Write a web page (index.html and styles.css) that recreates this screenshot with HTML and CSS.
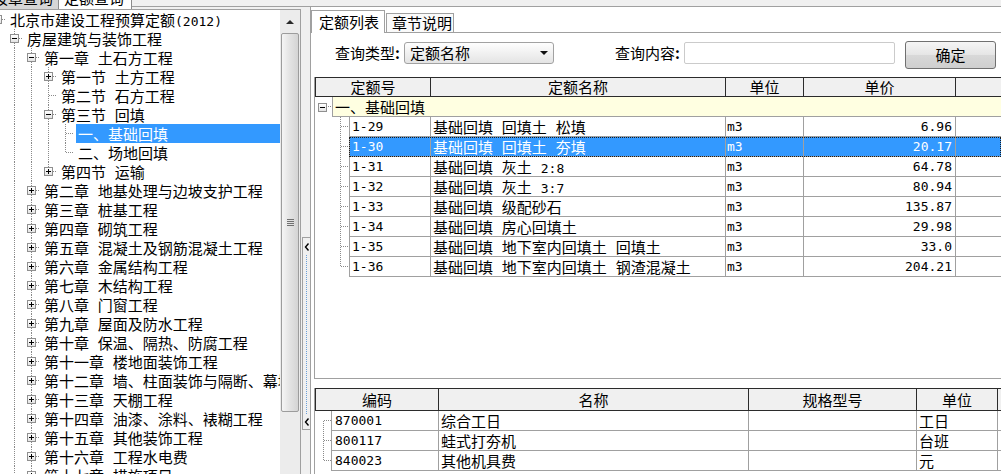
FILE: index.html
```html
<!DOCTYPE html>
<html lang="zh-CN">
<head>
<meta charset="utf-8">
<title>定额查询</title>
<link rel="stylesheet" href="styles.css">
</head>
<body>
<div class="app">
  <div class="topstrip">
    <div class="otab otab-a"><span>按章查询</span></div>
    <div class="otab otab-b"><span>定额查询</span></div>
    <div class="strip-fill"></div>
  </div>
  <div class="main">
    <div class="left">
      <div class="tree">
        <div class="tree-inner">
          <div class="row"><span class="g h"><i class="bx"></i></span><span class="lbl">北京市建设工程预算定额<span class="a">(2012)</span></span></div>
          <div class="row"><span class="g"></span><span class="g v h"><i class="bx"></i></span><span class="lbl">房屋建筑与装饰工程</span></div>
          <div class="row"><span class="g"></span><span class="g v"></span><span class="g v h"><i class="bx"></i></span><span class="lbl">第一章 土石方工程</span></div>
          <div class="row"><span class="g"></span><span class="g v"></span><span class="g v"></span><span class="g v h"><i class="bx plus"></i></span><span class="lbl">第一节 土方工程</span></div>
          <div class="row"><span class="g"></span><span class="g v"></span><span class="g v"></span><span class="g v h"></span><span class="lbl">第二节 石方工程</span></div>
          <div class="row"><span class="g"></span><span class="g v"></span><span class="g v"></span><span class="g v h"><i class="bx"></i></span><span class="lbl">第三节 回填</span></div>
          <div class="row sel"><span class="g"></span><span class="g v"></span><span class="g v"></span><span class="g v"></span><span class="g v h"></span><span class="lbl">一、基础回填</span></div>
          <div class="row"><span class="g"></span><span class="g v"></span><span class="g v"></span><span class="g v"></span><span class="g up h"></span><span class="lbl">二、场地回填</span></div>
          <div class="row"><span class="g"></span><span class="g v"></span><span class="g v"></span><span class="g up h"><i class="bx plus"></i></span><span class="lbl">第四节 运输</span></div>
          <div class="row"><span class="g"></span><span class="g v"></span><span class="g v h"><i class="bx plus"></i></span><span class="lbl">第二章 地基处理与边坡支护工程</span></div>
          <div class="row"><span class="g"></span><span class="g v"></span><span class="g v h"><i class="bx plus"></i></span><span class="lbl">第三章 桩基工程</span></div>
          <div class="row"><span class="g"></span><span class="g v"></span><span class="g v h"><i class="bx plus"></i></span><span class="lbl">第四章 砌筑工程</span></div>
          <div class="row"><span class="g"></span><span class="g v"></span><span class="g v h"><i class="bx plus"></i></span><span class="lbl">第五章 混凝土及钢筋混凝土工程</span></div>
          <div class="row"><span class="g"></span><span class="g v"></span><span class="g v h"><i class="bx plus"></i></span><span class="lbl">第六章 金属结构工程</span></div>
          <div class="row"><span class="g"></span><span class="g v"></span><span class="g v h"><i class="bx plus"></i></span><span class="lbl">第七章 木结构工程</span></div>
          <div class="row"><span class="g"></span><span class="g v"></span><span class="g v h"><i class="bx plus"></i></span><span class="lbl">第八章 门窗工程</span></div>
          <div class="row"><span class="g"></span><span class="g v"></span><span class="g v h"><i class="bx plus"></i></span><span class="lbl">第九章 屋面及防水工程</span></div>
          <div class="row"><span class="g"></span><span class="g v"></span><span class="g v h"><i class="bx plus"></i></span><span class="lbl">第十章 保温、隔热、防腐工程</span></div>
          <div class="row"><span class="g"></span><span class="g v"></span><span class="g v h"><i class="bx plus"></i></span><span class="lbl">第十一章 楼地面装饰工程</span></div>
          <div class="row"><span class="g"></span><span class="g v"></span><span class="g v h"><i class="bx plus"></i></span><span class="lbl">第十二章 墙、柱面装饰与隔断、幕墙工程</span></div>
          <div class="row"><span class="g"></span><span class="g v"></span><span class="g v h"><i class="bx plus"></i></span><span class="lbl">第十三章 天棚工程</span></div>
          <div class="row"><span class="g"></span><span class="g v"></span><span class="g v h"><i class="bx plus"></i></span><span class="lbl">第十四章 油漆、涂料、裱糊工程</span></div>
          <div class="row"><span class="g"></span><span class="g v"></span><span class="g v h"><i class="bx plus"></i></span><span class="lbl">第十五章 其他装饰工程</span></div>
          <div class="row"><span class="g"></span><span class="g v"></span><span class="g v h"><i class="bx plus"></i></span><span class="lbl">第十六章 工程水电费</span></div>
          <div class="row"><span class="g"></span><span class="g v"></span><span class="g v h"><i class="bx plus"></i></span><span class="lbl">第十七章 措施项目</span></div>
        </div>
      </div>
      <div class="vscroll">
        <div class="sb-up"><i class="tri-up"></i></div>
        <div class="sb-thumb"><i class="grip"></i></div>
      </div>
    </div>
    <div class="split">
      <div class="handle">
        <svg class="chev" width="6" height="8" viewBox="0 0 6 8"><path d="M4.5 0.5 L1.5 4 L4.5 7.5" fill="none" stroke="#000" stroke-width="1.4"/></svg>
        <i class="dots"></i>
        <svg class="chev" width="6" height="8" viewBox="0 0 6 8"><path d="M4.5 0.5 L1.5 4 L4.5 7.5" fill="none" stroke="#000" stroke-width="1.4"/></svg>
      </div>
    </div>
    <div class="right">
      <div class="tabs">
        <div class="tab tab-on">定额列表</div>
        <div class="tab tab-off">章节说明</div>
      </div>
      <div class="panel">
        <div class="query">
          <span class="qlabel">查询类型<span class="colon">:</span></span>
          <div class="select"><span>定额名称</span><i class="tri-down"></i></div>
          <span class="qlabel qlabel2">查询内容<span class="colon">:</span></span>
          <div class="input"></div>
          <div class="btn">确定</div>
        </div>

        <div class="grid grid-top">
          <div class="thead">
            <div class="th t1">定额号</div>
            <div class="th t2">定额名称</div>
            <div class="th t3">单位</div>
            <div class="th t4">单价</div>
            <div class="th t5"></div>
          </div>
          <div class="grow">
            <div class="ggut"><i class="bx"></i></div>
            <div class="gcell">一、基础回填</div>
          </div>
          <div class="drow"><div class="dgut conn"></div><div class="dcells"><div class="c c1 a">1-29</div><div class="c c2">基础回填 回填土 松填</div><div class="c c3 a">m3</div><div class="c c4 a">6.96</div><div class="c c5"></div></div></div>
          <div class="drow sel"><div class="dgut conn"></div><div class="dcells"><div class="c c1 a">1-30</div><div class="c c2">基础回填 回填土 夯填</div><div class="c c3 a">m3</div><div class="c c4 a">20.17</div><div class="c c5"></div></div></div>
          <div class="drow"><div class="dgut conn"></div><div class="dcells"><div class="c c1 a">1-31</div><div class="c c2">基础回填 灰土 <span class="a">2:8</span></div><div class="c c3 a">m3</div><div class="c c4 a">64.78</div><div class="c c5"></div></div></div>
          <div class="drow"><div class="dgut conn"></div><div class="dcells"><div class="c c1 a">1-32</div><div class="c c2">基础回填 灰土 <span class="a">3:7</span></div><div class="c c3 a">m3</div><div class="c c4 a">80.94</div><div class="c c5"></div></div></div>
          <div class="drow"><div class="dgut conn"></div><div class="dcells"><div class="c c1 a">1-33</div><div class="c c2">基础回填 级配砂石</div><div class="c c3 a">m3</div><div class="c c4 a">135.87</div><div class="c c5"></div></div></div>
          <div class="drow"><div class="dgut conn"></div><div class="dcells"><div class="c c1 a">1-34</div><div class="c c2">基础回填 房心回填土</div><div class="c c3 a">m3</div><div class="c c4 a">29.98</div><div class="c c5"></div></div></div>
          <div class="drow"><div class="dgut conn"></div><div class="dcells"><div class="c c1 a">1-35</div><div class="c c2">基础回填 地下室内回填土 回填土</div><div class="c c3 a">m3</div><div class="c c4 a">33.0</div><div class="c c5"></div></div></div>
          <div class="drow"><div class="dgut conn last"></div><div class="dcells"><div class="c c1 a">1-36</div><div class="c c2">基础回填 地下室内回填土 钢渣混凝土</div><div class="c c3 a">m3</div><div class="c c4 a">204.21</div><div class="c c5"></div></div></div>
        </div>

        <div class="grid grid-bottom">
          <div class="thead thead-b">
            <div class="th b1">编码</div>
            <div class="th b2">名称</div>
            <div class="th b3">规格型号</div>
            <div class="th b4">单位</div>
            <div class="th b5"></div>
          </div>
          <div class="drow"><div class="bgut conn first"></div><div class="dcells"><div class="c e1 a">870001</div><div class="c e2">综合工日</div><div class="c e3"></div><div class="c e4">工日</div><div class="c c5"></div></div></div>
          <div class="drow"><div class="bgut conn"></div><div class="dcells"><div class="c e1 a">800117</div><div class="c e2">蛙式打夯机</div><div class="c e3"></div><div class="c e4">台班</div><div class="c c5"></div></div></div>
          <div class="drow"><div class="bgut conn last"></div><div class="dcells"><div class="c e1 a">840023</div><div class="c e2">其他机具费</div><div class="c e3"></div><div class="c e4">元</div><div class="c c5"></div></div></div>
        </div>
      </div>
    </div>
  </div>
</div>
</body>
</html>
```

FILE: styles.css
```css
* { box-sizing: border-box; }
html, body { margin: 0; padding: 0; }
body {
  width: 1001px;
  height: 474px;
  overflow: hidden;
  background: #f0f0f0;
  font-family: "Noto Sans CJK SC", "Noto Sans", sans-serif;
  font-size: 15px;
  color: #000;
  word-spacing: 5.5px;
}
i { font-style: normal; display: block; }
.a { font-family: "DejaVu Sans Mono", monospace; font-size: 13px; word-spacing: 0; letter-spacing: 0; }

.app { display: flex; flex-direction: column; height: 474px; }

/* outer (cut-off) tab strip */
.topstrip { display: flex; height: 9px; flex: none; }
.otab { height: 9px; overflow: hidden; white-space: nowrap; display: flex; line-height: 15px; border-right: 1px solid #8c8c8c; }
.otab span { display: block; margin-top: -10px; flex: none; }
.otab-a { width: 59px; background: #d6d6d6; justify-content: flex-end; padding-right: 5px; }
.otab-b { width: 73px; background: #fff; padding-left: 5px; }
.strip-fill { flex: 1; height: 7px; border-bottom: 1px solid #a0a0a0; }

.main { display: flex; flex: 1; min-height: 0; }

/* left tree panel */
.left { width: 301px; flex: none; display: flex; background: #fff; border-top: 1px solid #a0a0a0; border-right: 1px solid #a0a0a0; }
.tree { width: 280px; flex: none; overflow: hidden; }
.tree-inner { margin-left: -11px; }
.row { display: flex; height: 19px; white-space: nowrap; }
.g { width: 17px; height: 19px; flex: none; position: relative; display: flex; align-items: center; justify-content: center; }
.g.v::before, .g.up::before {
  content: ""; position: absolute; left: 8px; width: 1px; top: 0; bottom: 0;
  background: repeating-linear-gradient(to bottom, #8a8a8a 0 1px, transparent 1px 2px);
}
.g.up::before { bottom: auto; height: 10px; }
.g.h::after {
  content: ""; position: absolute; left: 9px; right: 0; top: 9px; height: 1px;
  background: repeating-linear-gradient(to right, #8a8a8a 0 1px, transparent 1px 2px);
}
.bx { width: 9px; height: 9px; border: 1px solid #8f8f8f; background: linear-gradient(#ffffff, #e4e4e4); position: relative; z-index: 1; flex: none; }
.bx::before { content: ""; position: absolute; left: 1px; top: 3px; width: 5px; height: 1px; background: #000; }
.bx.plus::after { content: ""; position: absolute; left: 3px; top: 1px; width: 1px; height: 5px; background: #000; }
.lbl { height: 19px; line-height: 19px; padding: 0 2px; margin-left: 2px; flex: none; }
.row.sel .lbl { background: #3399ff; color: #fff; flex: 1 0 auto; }

/* tree scrollbar */
.vscroll { width: 20px; flex: none; background: #ececec; display: flex; flex-direction: column; }
.sb-up { height: 23px; display: flex; align-items: center; justify-content: center; }
.tri-up { width: 0; height: 0; border-left: 4px solid transparent; border-right: 4px solid transparent; border-bottom: 4px solid #2a2a2a; }
.sb-thumb {
  height: 379px; margin: 0 1px; border: 1px solid #9c9c9c; border-radius: 2px;
  background: linear-gradient(to right, #f5f5f5, #e4e4e4 45%, #d4d4d4);
  display: flex; align-items: center; justify-content: center;
}
.grip { width: 7px; height: 7px; background: repeating-linear-gradient(to bottom, #707070 0 1px, transparent 1px 2px); }

/* splitter */
.split { width: 9px; flex: none; padding-top: 228px; }
.handle {
  margin-left: 1px; width: 8px; height: 193px; border: 1px solid #a0a0a0; border-right: none;
  display: flex; flex-direction: column; align-items: center; padding: 5px 0 3px; background: #f0f0f0;
}
.chev { display: block; flex: none; }
.dots { flex: 1; width: 1px; margin: 4px 0; background: repeating-linear-gradient(to bottom, #6a9fd8 0 1px, transparent 1px 2px); }

/* right panel */
.right { flex: 1; min-width: 0; background: #fff; border-left: 1px solid #a0a0a0; margin-top: -2px; display: flex; flex-direction: column; }
.tabs { height: 26px; flex: none; padding-top: 3px; display: flex; align-items: flex-end; border-bottom: 1px solid #a0a0a0; }
.tab { border: 1px solid #a0a0a0; border-bottom: none; white-space: nowrap; word-spacing: 0; }
.tab-on { width: 74px; height: 23px; margin-bottom: -1px; background: #fff; padding-left: 7px; line-height: 21px; position: relative; }
.tab-off { width: 68px; height: 19px; margin-left: 1px; background: #fafafa; padding-left: 5px; line-height: 18px; }

.panel { flex: 1; display: flex; flex-direction: column; min-height: 0; }
.query { height: 44px; flex: none; display: flex; align-items: flex-start; padding: 9px 0 0 24px; }
.qlabel { height: 22px; line-height: 22px; white-space: nowrap; display: flex; flex: none; }
.colon { display: block; width: 5px; text-align: center; font-weight: bold; }
.qlabel2 { margin-left: 61px; }
.select {
  width: 150px; height: 22px; margin-left: 4px; flex: none; border: 1px solid #a2a2a2; border-radius: 3px;
  background: linear-gradient(#fefefe, #e4e4e4); display: flex; align-items: center; justify-content: space-between;
  padding: 0 5px 0 5px; line-height: 20px;
}
.tri-down { width: 0; height: 0; border-left: 4px solid transparent; border-right: 4px solid transparent; border-top: 4px solid #111; }
.input { width: 211px; height: 22px; margin-left: 4px; flex: none; border: 1px solid #cbcbcb; border-radius: 2px; background: #fff; }
.btn {
  width: 91px; height: 28px; margin: -1px 0 0 10px; flex: none; border: 1px solid #707070; border-radius: 3px;
  background: linear-gradient(#f5f5f5, #e6e6e6 48%, #d8d8d8 52%, #cfcfcf);
  display: flex; align-items: center; justify-content: center; padding-bottom: 1px;
}

/* grids */
.grid { margin-left: 3px; border-left: 1px solid #a0a0a0; border-bottom: 1px solid #a0a0a0; background: #fff; overflow: hidden; flex: none; }
.grid-top { height: 302px; }
.grid-bottom { margin-top: 9px; flex: 1; border-bottom: none; }
.thead { display: flex; height: 20px; border-top: 1px solid #2b2b2b; border-bottom: 1px solid #2b2b2b; background: #f0f0f0; }
.thead-b { height: 23px; }
.th { border-right: 1px solid #2b2b2b; text-align: center; line-height: 18px; white-space: nowrap; flex: none; word-spacing: 0; }
.thead-b .th { line-height: 21px; }
.t1 { width: 116px; border-left: 1px solid #2b2b2b; }
.t2 { width: 295px; }
.t3 { width: 78px; }
.t4 { width: 152px; }
.th.t5, .th.b5 { flex: 1; border-right: none; }
.b1 { width: 124px; border-left: 1px solid #2b2b2b; }
.b2 { width: 310px; }
.b3 { width: 168px; }
.b4 { width: 81px; }

.grow { display: flex; height: 20px; }
.ggut { width: 17px; flex: none; position: relative; display: flex; align-items: center; padding-left: 3px; }
.ggut::after {
  content: ""; position: absolute; left: 13px; right: 0; top: 9px; height: 1px;
  background: repeating-linear-gradient(to right, #8a8a8a 0 1px, transparent 1px 2px);
}
.gcell { flex: 1; background: #ffffe1; border-left: 1px solid #a0a0a0; border-bottom: 1px solid #a0a0a0; line-height: 19px; padding-left: 2px; white-space: nowrap; }

.drow { display: flex; height: 20px; }
.dgut { width: 34px; flex: none; --x: 25px; }
.bgut { width: 16px; flex: none; --x: 8px; }
.conn { position: relative; }
.conn::before {
  content: ""; position: absolute; left: var(--x); width: 1px; top: 0; bottom: 0;
  background: repeating-linear-gradient(to bottom, #8a8a8a 0 1px, transparent 1px 2px);
}
.conn.first::before { top: 10px; }
.conn.last::before { bottom: auto; height: 10px; }
.conn::after {
  content: ""; position: absolute; left: calc(var(--x) + 1px); right: 0; top: 9px; height: 1px;
  background: repeating-linear-gradient(to right, #8a8a8a 0 1px, transparent 1px 2px);
}
.dcells { display: flex; flex: 1; min-width: 0; }
.c { flex: none; height: 20px; border-right: 1px solid #a0a0a0; border-bottom: 1px solid #a0a0a0; line-height: 19px; padding-left: 2px; overflow: hidden; white-space: nowrap; }
.c1 { width: 82px; border-left: 1px solid #a0a0a0; }
.c2 { width: 295px; }
.c3 { width: 78px; padding-left: 1px; }
.c4 { width: 152px; text-align: right; padding-right: 3px; }
.c.c5 { flex: 1; border-right: none; }
.e1 { width: 108px; border-left: 1px solid #a0a0a0; padding-left: 3px; }
.e2 { width: 310px; }
.e3 { width: 168px; }
.e4 { width: 81px; }
.drow.sel .dcells { background: #3399ff; color: #fff; outline: 1px dotted #1c1c1c; outline-offset: -1px; }
```
